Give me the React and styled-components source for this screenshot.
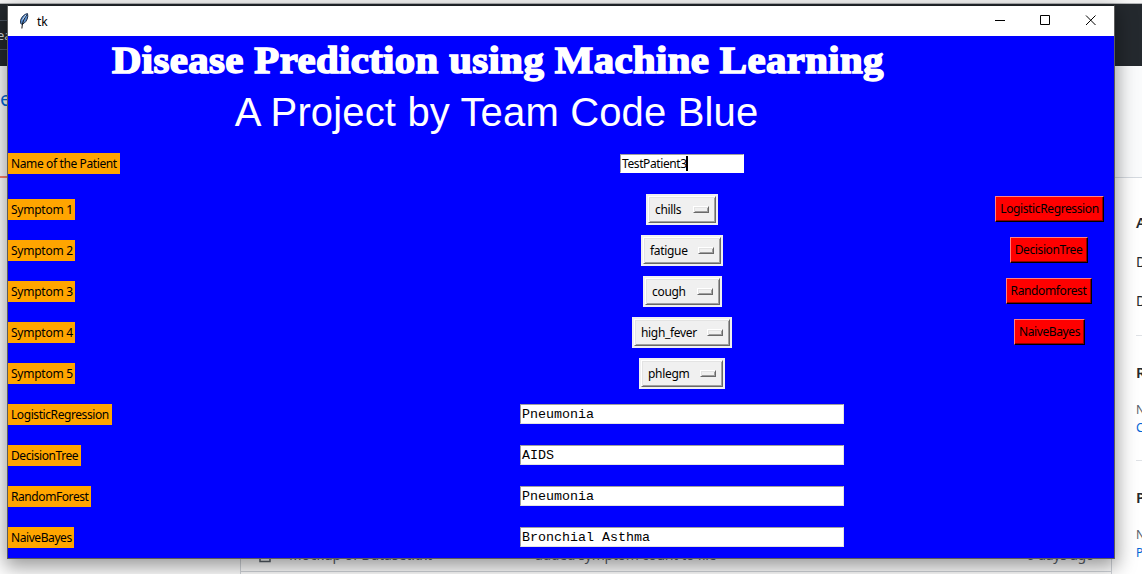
import React from "react";
import styled, { createGlobalStyle } from "styled-components";

const GlobalStyle = createGlobalStyle`
  * { box-sizing: border-box; }
  body { margin: 0; background: #fff; overflow: hidden; }
`;

const ui = `"Segoe UI", "Noto Sans", "Open Sans", sans-serif`;

const Desktop = styled.div`
  position: relative;
  width: 1142px;
  height: 574px;
  overflow: hidden;
  background: #fff;
  font-family: ${ui};
`;

/* Web page behind the window */
const Page = styled.div`
  display: flex;
  flex-direction: column;
  height: 100%;
`;
const BrowserEdge = styled.div`
  height: 4px;
  background: #f6f6f6;
  border-bottom: 1px solid #b4b6b8;
`;
const SiteHeader = styled.div`
  height: 62px;
  padding-top: 16px;
  background: #24292e;
`;
const SearchBox = styled.div`
  width: 300px;
  height: 30px;
  border: solid #4d5763;
  border-width: 1px 0;
  color: #d6d9dc;
  font-size: 13px;
  line-height: 29px;
  text-indent: -3px;
`;
const RepoHeader = styled.div`
  height: 112px;
  background: #fafbfc;
  border-bottom: 1px solid #d5dae0;
  color: #0366d6;
  font-size: 20px;
  line-height: 66px;
`;
const ActiveTab = styled.div`
  width: 60px;
  height: 2px;
  margin-top: -2px;
  background: #f9826c;
`;
const PageBody = styled.div`
  display: flex;
  flex: 1;
  justify-content: flex-end;
`;
const FileTable = styled.div`
  display: flex;
  flex-direction: column;
  justify-content: flex-end;
  width: 872px;
  margin-right: 24px;
  border: solid #d1d5da;
  border-width: 0 1px;
`;
const FileRow = styled.div`
  display: flex;
  align-items: center;
  height: 32px;
  margin-bottom: 2px;
  padding: 0 17px 1px 18px;
  border-bottom: 1px solid #d1d5da;
  color: #586069;
  font-size: 14px;
  line-height: 20px;
  letter-spacing: -0.3px;
`;
const FileIcon = styled.svg`
  width: 12px;
  height: 16px;
  margin: -1px 18px 0 0;
`;
const FileName = styled.span`
  width: 246px;
  letter-spacing: -0.1px;
`;
const FileMessage = styled.span`
  flex: 1;
`;
const Sidebar = styled.aside`
  width: 6px;
  padding-top: 32px;
  white-space: nowrap;
`;
const SideLine = styled.div`
  height: ${(p) => p.$h}px;
  line-height: 24px;
  font-size: ${(p) => p.$size || 14}px;
  font-weight: ${(p) => (p.$bold ? 600 : 400)};
  color: ${(p) => p.$color || "#24292e"};
`;
const SideRule = styled.div`
  height: 1px;
  margin-bottom: ${(p) => p.$gap}px;
  background: #dfe2e6;
`;

/* Application window */
const Window = styled.main`
  position: absolute;
  left: 7px;
  top: 5px;
  width: 1108px;
  height: 554px;
  border: 1px solid #5c5c5c;
  border-top-color: #1c2024;
  background: #00f;
  box-shadow: 0 6px 18px 2px rgba(0, 0, 0, 0.4);
`;
const TitleBar = styled.header`
  display: flex;
  align-items: center;
  height: 30px;
  padding-left: 11px;
  background: #fff;
  color: #000;
  font-size: 12px;
`;
const Feather = styled.svg`
  width: 10px;
  height: 16px;
  margin-right: 8px;
`;
const WindowName = styled.span`
  flex: 1;
`;
const Controls = styled.svg`
  width: 138px;
  height: 30px;
`;
const Headings = styled.div`
  display: flex;
  flex-direction: column;
  align-items: center;
  width: 976px;
  height: 102px;
  color: #fff;
  white-space: nowrap;
`;
const Title = styled.h1`
  margin: 0;
  height: 51px;
  padding-left: 3px;
  font: bold 37.5px/49px "Liberation Serif", serif;
  letter-spacing: 0.35px;
  -webkit-text-stroke: 1.5px #fff;
  transform: scaleX(1.088);
`;
const Subtitle = styled.h2`
  margin: 0;
  height: 51px;
  padding-left: 1px;
  font: normal 40px/51px "Liberation Sans", sans-serif;
  letter-spacing: 0.15px;
`;
const Row = styled.div`
  display: grid;
  grid-template-columns: 372px 604px 130px;
  align-items: center;
  height: ${(p) => p.$h || 41}px;
`;
const Label = styled.label`
  width: ${(p) => p.$w}px;
  height: 21px;
  padding-left: 3px;
  background: orange;
  color: #000;
  font-size: 12px;
  line-height: 21px;
  letter-spacing: ${(p) => p.$track || 0}px;
  white-space: nowrap;
`;
const Cell = styled.div`
  display: flex;
  justify-content: center;
`;
const Entry = styled.div`
  display: flex;
  align-items: center;
  width: 124px;
  height: 19px;
  padding-left: 1px;
  border: 1px solid;
  border-color: #a0a0a0 #fff #fff #a0a0a0;
  background: #fff;
  font-size: 12px;
  letter-spacing: -0.4px;
`;
const Caret = styled.i`
  width: 2px;
  height: 15px;
  margin-left: -1px;
  background: #000;
`;
const Output = styled.div`
  width: 324px;
  height: 20px;
  margin-bottom: 1px;
  padding-left: 1px;
  border: 1px solid;
  border-color: #a0a0a0 #e3e3e3 #e3e3e3 #a0a0a0;
  background: #fff;
  font: 13.33px/20px "Liberation Mono", monospace;
`;
const OptionFrame = styled.div`
  width: ${(p) => p.$w}px;
  height: 31px;
  margin-left: ${(p) => p.$w % 2}px;
  padding: 2px;
  background: #f0f0f0;
`;
const OptionFace = styled.div`
  display: flex;
  align-items: center;
  justify-content: space-between;
  height: 27px;
  padding: 0 6px;
  border: 1px solid;
  border-color: #fff #696969 #696969 #fff;
  box-shadow: inset 1px 1px #e3e3e3, inset -1px -1px #a0a0a0;
  font-size: 12px;
  letter-spacing: ${(p) => p.$track || 0}px;
`;
const Indicator = styled.i`
  width: 16px;
  height: 7px;
  margin-bottom: 1px;
  border: 1px solid;
  border-color: #fff #696969 #696969 #fff;
  box-shadow: inset 1px 1px #e3e3e3, inset -1px -1px #a0a0a0;
`;
const Button = styled.button`
  width: ${(p) => p.$w}px;
  height: 26px;
  margin: 0 ${(p) => (p.$w % 2 ? 0 : 1)}px 1px ${(p) => (p.$w % 2 ? 1 : 0)}px;
  padding: 0;
  border: 1px solid;
  border-color: #ff8080 #000 #000 #ff8080;
  box-shadow: inset -1px -1px #900000;
  background: #f00;
  color: #000;
  font: 12px/22px ${ui};
  letter-spacing: ${(p) => p.$track || 0}px;
  white-space: nowrap;
`;

const symptoms = [
  { value: "chills", w: 72, model: "LogisticRegression", bw: 109 },
  { value: "fatigue", w: 82, model: "DecisionTree", bw: 78 },
  { value: "cough", w: 79, model: "Randomforest", bw: 86 },
  { value: "high_fever", w: 100, model: "NaiveBayes", bw: 71 },
  { value: "phlegm", w: 86 },
];
const results = [
  { model: "LogisticRegression", w: 104, value: "Pneumonia" },
  { model: "DecisionTree", w: 73, value: "AIDS" },
  { model: "RandomForest", w: 83, value: "Pneumonia" },
  { model: "NaiveBayes", w: 66, value: "Bronchial Asthma" },
];

function Backdrop() {
  return (
    <Page>
      <BrowserEdge />
      <SiteHeader><SearchBox>ea</SearchBox></SiteHeader>
      <RepoHeader>e</RepoHeader>
      <ActiveTab />
      <PageBody>
        <FileTable>
          <FileRow>
            <FileIcon viewBox="0 0 12 16" fill="none" stroke="#586069" strokeWidth="1.5">
              <path d="M1 1h7l3 3v10.5H1z" />
            </FileIcon>
            <FileName>Mockup of Dataset.txt</FileName>
            <FileMessage>added symptom count to file</FileMessage>
            <span>6 days ago</span>
          </FileRow>
        </FileTable>
        <Sidebar>
          <SideLine $h={40} $bold $size={15}>About</SideLine>
          <SideLine $h={39}>Disease</SideLine>
          <SideLine $h={46}>Data</SideLine>
          <SideRule $gap={24} />
          <SideLine $h={38} $bold $size={15}>Releases</SideLine>
          <SideLine $h={18} $size={12} $color="#586069">No releases</SideLine>
          <SideLine $h={44} $size={12} $color="#0366d6">Create</SideLine>
          <SideRule $gap={24} />
          <SideLine $h={38} $bold $size={15}>Packages</SideLine>
          <SideLine $h={18} $size={12} $color="#586069">No packages</SideLine>
          <SideLine $h={20} $size={12} $color="#0366d6">Publish</SideLine>
        </Sidebar>
      </PageBody>
    </Page>
  );
}

export default function App() {
  return (
    <Desktop>
      <GlobalStyle />
      <Backdrop />
      <Window>
        <TitleBar>
          <Feather viewBox="0 0 10 16">
            <path d="M8.5.6C5.5 1 2.4 4 1.5 7.5l.2 3 1.3.8c3-1 5.4-4 5.8-8z" fill="#5b8fd0" stroke="#1d2e48" />
            <path d="M7.6 2.2C5.4 5 3.4 8.5 2.9 15.5" fill="none" stroke="#111" />
            <path d="M6.8 2 3.6 6.8" stroke="#c5dcf5" />
          </Feather>
          <WindowName>tk</WindowName>
          <Controls viewBox="0 0 138 30" fill="none" stroke="#000">
            <path d="M19 14.5h10M64.5 9.5h9v9h-9zM110 9.5l9.5 9.5M119.5 9.5 110 19" />
          </Controls>
        </TitleBar>
        <Headings>
          <Title>Disease Prediction using Machine Learning</Title>
          <Subtitle>A Project by Team Code Blue</Subtitle>
        </Headings>
        <Row $h={51}>
          <Label $w={112} $track={-0.38}>Name of the Patient</Label>
          <Cell><Entry>TestPatient3<Caret /></Entry></Cell>
        </Row>
        {symptoms.map((s, i) => (
          <Row key={s.value}>
            <Label $w={67} $track={-0.25}>Symptom {i + 1}</Label>
            <Cell>
              <OptionFrame $w={s.w}>
                <OptionFace $track={-0.32}>{s.value}<Indicator /></OptionFace>
              </OptionFrame>
            </Cell>
            {s.model && <Cell><Button $w={s.bw} $track={-0.38}>{s.model}</Button></Cell>}
          </Row>
        ))}
        {results.map((r) => (
          <Row key={r.model}>
            <Label $w={r.w} $track={-0.42}>{r.model}</Label>
            <Cell><Output>{r.value}</Output></Cell>
          </Row>
        ))}
      </Window>
    </Desktop>
  );
}
